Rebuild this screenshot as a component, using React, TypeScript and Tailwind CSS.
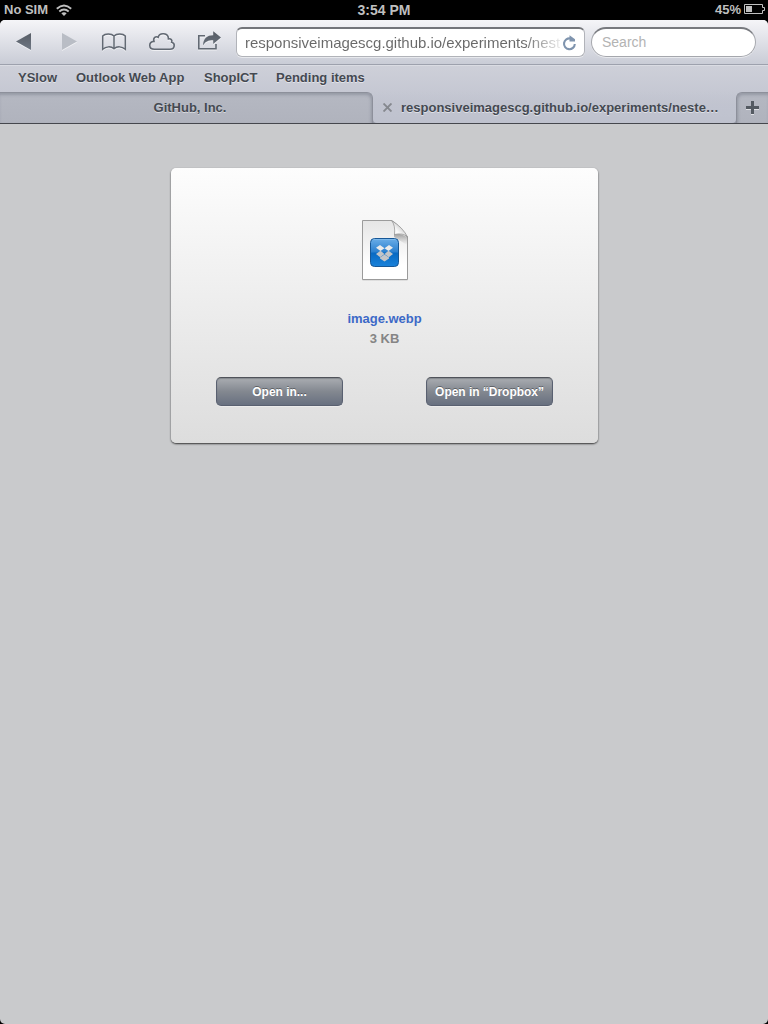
import React from "react";

function StatusBar() {
  return (
    <div className="grid h-5 shrink-0 grid-cols-3 items-center bg-black text-[13px] leading-5 font-bold text-[#bfbfbf]">
      <div className="flex items-center pl-1">
        <span className="w-[44px] whitespace-nowrap">No SIM</span>
        <svg className="ml-2 h-[12px] w-[16px]" viewBox="0 0 16 12" fill="none" stroke="#bfbfbf" strokeWidth="1.9">
          <path d="M.8 4.7Q8-1.9 15.2 4.700" />
          <path d="M3.300 7.500Q8 3.300 12.700 7.500" />
          <path d="M5.300 9.300Q8 7 10.700 9.300L8 12Z" fill="#bfbfbf" stroke="none" />
        </svg>
      </div>
      <div className="text-center text-[14px]">3:54 PM</div>
      <div className="flex items-center justify-end pr-[3px]">
        <span>45%</span>
        <svg className="mb-[2px] ml-[3px] h-[10px] w-[21px]" viewBox="0 0 21 10" fill="none">
          <path d="M.5.5H18.5V3.5H20.5V6.5H18.5V9.5H.5Z" stroke="#bfbfbf" />
          <path d="M2 2H8V8H2Z" fill="#bfbfbf" />
        </svg>
      </div>
    </div>
  );
}

function Toolbar() {
  return (
    <div className="flex h-[45px] shrink-0 border-b border-[#9da1ad] bg-linear-to-b from-[#f5f5f8] to-[#c9ccd6]">
      <svg className="h-[44px] w-[236px] shrink-0 drop-shadow-[0_1px_0_rgba(255,255,255,.6)]" viewBox="0 0 236 44" fill="none">
        <defs>
          <linearGradient id="ink" x1="0" y1="11" x2="0" y2="31" gradientUnits="userSpaceOnUse">
            <stop stopColor="#555b63" />
            <stop offset="1" stopColor="#707985" />
          </linearGradient>
        </defs>
        <path d="M16 21.500L31 13V30Z" fill="url(#ink)" />
        <path d="M77 21.500L62 13V30Z" fill="#b9bdc5" />
        <path
          d="M102.700 29.300V16C105 13.300 111.500 13.300 114 16C116.500 13.300 123 13.300 125.300 16V29.300C122 26.300 117 26 114 28.800C111 26 106 26.300 102.700 29.300ZM114 16V28.800"
          stroke="#626973"
          strokeWidth="1.500"
        />
        <path
          d="M154.500 29.300C148.200 29.300 148.300 21.800 154 21.400C152.800 17.700 155.800 15.900 158.200 17.200C159.500 12.300 168.500 12.500 168.400 18.900C171 18.400 172.400 20.300 171.700 22.200C175.500 23.200 175 29.300 170 29.300Z"
          stroke="#626973"
          strokeWidth="1.600"
        />
        <path d="M205 15.800H198.800V28.700H216V24" stroke="#626973" strokeWidth="1.600" />
        <path d="M203 25.500C203.300 18.500 207 15.300 213.200 15.300V11.300L221 17.600L213.200 24V20.200C208 20.200 205.500 21.500 203 25.500Z" fill="url(#ink)" />
      </svg>
      <div className="mt-[7px] flex h-[30px] w-[349px] shrink-0 items-center rounded-[6px] border border-t-2 border-[#b1b3b9] border-t-[#73757a] bg-white pl-2 shadow-[0_1px_0_rgba(255,255,255,.5)]">
        <div className="w-[316px] bg-linear-to-r from-[#686868] from-88% to-[#eeeeee] bg-clip-text text-[15px] leading-5 tracking-[-0.02px] whitespace-nowrap text-transparent">
          responsiveimagescg.github.io/experiments/nest
        </div>
        <svg className="ml-px h-4 w-[15px]" viewBox="0 0 15 16" fill="none">
          <path d="M8.500 3.500A5.400 5.400 0 1 0 12.800 9" stroke="#7f94ae" strokeWidth="2.100" />
          <path d="M7.500 .3L13 4.300V6.500H7.500Z" fill="#7f94ae" />
        </svg>
      </div>
      <div className="mt-[7px] ml-1.5 flex h-[30px] w-[165px] shrink-0 items-center rounded-full border border-t-2 border-[#a5a7ad] border-t-[#77797e] bg-white pl-[10px] text-[14px] text-[#b3b3b3] shadow-[0_1px_0_rgba(255,255,255,.5)]">
        Search
      </div>
    </div>
  );
}

function Bookmarks() {
  return (
    <div className="flex h-[27px] shrink-0 items-center gap-[19px] border-t border-[#dadce3] pl-[18px] text-[13px] leading-[24px] font-bold whitespace-nowrap text-[#444951] [text-shadow:0_1px_0_rgba(255,255,255,.5)]">
      <span className="mb-[2px] w-[39px]">YSlow</span>
      <span className="mb-[2px] w-[109px]">Outlook Web App</span>
      <span className="mb-[2px] w-[53px]">ShopICT</span>
      <span className="mb-[2px]">Pending items</span>
    </div>
  );
}

function Tabs() {
  return (
    <div className="flex h-[32px] shrink-0 border-b border-[#45474d] bg-linear-to-b from-transparent from-80% to-[#969aa6] to-80% text-[13px] font-bold text-[#444951] [text-shadow:0_1px_0_rgba(255,255,255,.5)]">
      <div className="flex w-[373px] items-center justify-center rounded-tr-[6px] border-t border-r border-[#8d909b] bg-linear-to-b from-[#b5b8c2] to-[#b0b3bd] pl-[8px] shadow-[inset_-1px_2px_3px_rgba(70,75,90,.28)]">
        GitHub, Inc.
      </div>
      <div className="flex w-[363px] items-center rounded-b-[4px] bg-linear-to-b from-transparent via-[#c0c3cf] via-70% to-[#bec1cd] pl-[10px]">
        <svg className="h-[9px] w-[9px]" viewBox="0 0 9 9">
          <path d="M.500.500L8.500 8.500M8.500.500L.500 8.500" stroke="#85888e" strokeWidth="1.900" />
        </svg>
        <span className="ml-[9px] whitespace-nowrap">responsiveimagescg.github.io/experiments/neste…</span>
      </div>
      <div className="flex w-8 items-center justify-center rounded-tl-[6px] border-t border-l border-[#8d909b] bg-linear-to-b from-[#b5b8c2] to-[#b0b3bd] shadow-[inset_1px_2px_3px_rgba(70,75,90,.28)]">
        <svg className="mb-[2px] h-[13px] w-[13px] drop-shadow-[0_1px_0_rgba(255,255,255,.6)]" viewBox="0 0 13 13">
          <path d="M6.500 0V13M0 6.500H13" stroke="#545a62" strokeWidth="3" />
        </svg>
      </div>
    </div>
  );
}

function FileIcon() {
  return (
    <svg className="h-[64px] w-[50px]" viewBox="0 0 50 64">
      <defs>
        <linearGradient id="page" x1="0" y1="0" x2="0" y2="1">
          <stop stopColor="#e5e5e5" />
          <stop offset=".75" stopColor="#fff" />
        </linearGradient>
        <linearGradient id="blue" x1="0" y1="0" x2="0" y2="1">
          <stop stopColor="#6caee8" />
          <stop offset=".48" stopColor="#2b80cf" />
          <stop offset=".52" stopColor="#0869c2" />
          <stop offset="1" stopColor="#1a82da" />
        </linearGradient>
        <linearGradient id="curl" x1="0" y1="1" x2=".7" y2=".3">
          <stop stopColor="#fff" />
          <stop offset=".5" stopColor="#fafafa" />
          <stop offset="1" stopColor="#c6c6c6" />
        </linearGradient>
        <linearGradient id="fold" x1="0" y1="0" x2="0" y2="1">
          <stop stopColor="#666" stopOpacity=".6" />
          <stop offset="1" stopColor="#999" stopOpacity="0" />
        </linearGradient>
      </defs>
      <path d="M2.500 3.500H32L47.500 20V62.500H2.500Z" fill="#000" opacity=".15" />
      <path d="M2.500 2.500H31.500Q37 5 47.500 19V61.500H2.500Z" fill="url(#page)" stroke="#9b9b9b" />
      <path d="M34 16Q40 15 47 19V27L34 19Z" fill="url(#fold)" />
      <path d="M31.500 2.500Q35.500 7 34.500 16.500Q43 14.500 47.500 19Q43 9.500 31.500 2.500Z" fill="url(#curl)" stroke="#8b8b8b" strokeWidth=".7" />
      <rect x="10.500" y="20.500" width="28" height="28" rx="4" fill="url(#blue)" stroke="#175796" />
      <path d="M13 21.500H36" stroke="#9bccf2" strokeWidth=".6" opacity=".7" />
      <g fill="#ebebeb">
        <path d="M20 27L24.500 30.200L20.500 33L16 29.700Z" />
        <path d="M29 27L33 29.700L28.500 33L24.500 30.200Z" />
        <g fill="#c4c5c7">
          <path d="M20.500 32.700L24.500 36.100L20.200 39.300L16 36Z" />
          <path d="M28.500 32.700L33 36L28.800 39.300L24.500 36.100Z" />
          <path d="M24.500 36.600L29 39.500V40.500L24.500 43.500L20 40.500V39.500Z" />
        </g>
      </g>
    </svg>
  );
}

function ActionButton({ children }: { children: React.ReactNode }) {
  return (
    <button className="h-[29px] w-[127px] rounded-[5px] border border-[#596070] border-t-[#50535a] bg-linear-to-b from-[#aaadb2] via-[#838890] to-[#687080] pt-px text-center text-[12px] leading-[26px] font-bold tracking-[-0.03px] whitespace-nowrap text-white shadow-[inset_0_1px_1px_rgba(70,75,80,.35),0_1px_0_rgba(255,255,255,.35)] [text-shadow:0_-1px_0_rgba(0,0,0,.35)]">
      {children}
    </button>
  );
}

export default function App() {
  return (
    <div className="flex h-screen w-full flex-col overflow-hidden bg-black font-['Liberation_Sans',Arial,sans-serif]">
      <StatusBar />
      <div className="flex min-h-0 flex-1 flex-col overflow-hidden rounded-[5px] bg-[#c9cacc]">
        <Toolbar />
        <div className="flex shrink-0 flex-col bg-linear-to-b from-[#ced0d9] to-[#bcbfcc]">
          <Bookmarks />
          <Tabs />
        </div>
        <main className="flex flex-1 flex-col items-center pt-11 pl-px">
          <section className="flex h-[275px] w-[427px] flex-col items-center rounded-[5px] bg-linear-to-b from-[#fdfdfd] to-[#dddddd] shadow-[0_1px_2px_rgba(0,0,0,.75)]">
            <div className="mt-[50px]">
              <FileIcon />
            </div>
            <div className="mt-[27px] text-[13px] leading-5 font-bold tracking-[-0.03px] text-[#3c69c7]">image.webp</div>
            <div className="text-[13px] leading-5 font-bold text-[#858585]">3 KB</div>
            <div className="mt-[28px] flex gap-[83px]">
              <ActionButton>Open in...</ActionButton>
              <ActionButton>Open in “Dropbox”</ActionButton>
            </div>
          </section>
        </main>
      </div>
    </div>
  );
}
